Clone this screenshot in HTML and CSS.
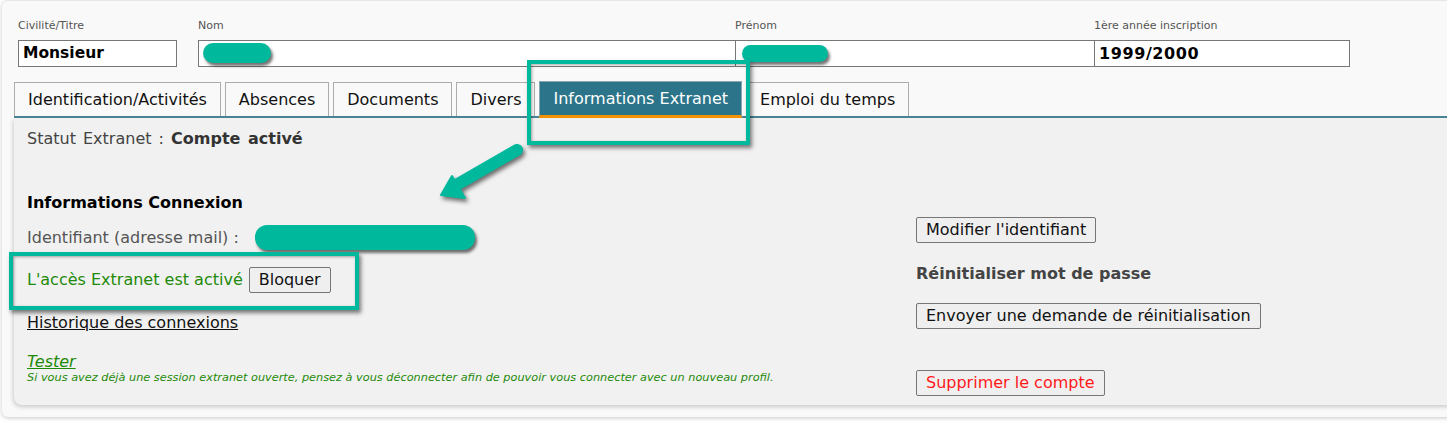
FILE: index.html
```html
<!DOCTYPE html>
<html lang="fr">
<head>
<meta charset="utf-8">
<title>Informations Extranet</title>
<link rel="stylesheet" href="styles.css">
</head>
<body>
<div class="card">
  <div class="fields">
    <div class="field f-civ">
      <label class="lbl">Civilité/Titre</label>
      <div class="inp">Monsieur</div>
    </div>
    <div class="field f-nom">
      <label class="lbl">Nom</label>
      <div class="inp"></div>
    </div>
    <div class="field f-pre">
      <label class="lbl">Prénom</label>
      <div class="inp"></div>
    </div>
    <div class="field f-ann">
      <label class="lbl">1ère année inscription</label>
      <div class="inp">1999/2000</div>
    </div>
  </div>

  <div class="tabs">
    <div class="tab">Identification/Activités</div>
    <div class="tab">Absences</div>
    <div class="tab">Documents</div>
    <div class="tab">Divers</div>
    <div class="tab active">Informations Extranet</div>
    <div class="tab">Emploi du temps</div>
  </div>

  <div class="panel">
    <div class="col-left">
      <div class="statut">Statut Extranet : <b>Compte activé</b></div>
      <div class="h-conn">Informations Connexion</div>
      <div class="ident">Identifiant (adresse mail) : </div>
      <div class="acces"><span class="green">L'accès Extranet est activé</span><button class="btn">Bloquer</button></div>
      <div class="histo"><a class="link">Historique des connexions</a></div>
      <div class="tester"><a class="link green">Tester</a></div>
      <div class="note">Si vous avez déjà une session extranet ouverte, pensez à vous déconnecter afin de pouvoir vous connecter avec un nouveau profil.</div>
    </div>
    <div class="col-right">
      <button class="btn b-mod">Modifier l'identifiant</button>
      <div class="h-reinit">Réinitialiser mot de passe</div>
      <button class="btn b-env">Envoyer une demande de réinitialisation</button>
      <button class="btn b-sup">Supprimer le compte</button>
    </div>
  </div>
</div>

<div class="redact r-nom"></div>
<div class="redact r-pre"></div>
<div class="redact r-id"></div>
<div class="hl hl-tab"></div>
<div class="hl hl-acces"></div>
<svg class="arrow" width="100" height="70" viewBox="0 0 100 70">
  <line x1="92" y1="15" x2="33" y2="49" stroke="#00b89c" stroke-width="12" stroke-linecap="round"/>
  <polygon points="16,60 27,41 40,63" fill="#00b89c" stroke="#00b89c" stroke-width="2" stroke-linejoin="round"/>
</svg>
</body>
</html>
```
FILE: styles.css
```css
html, body {
  margin: 0;
  padding: 0;
  background: #ffffff;
}
body {
  width: 1447px;
  height: 432px;
  overflow: hidden;
  position: relative;
  font-family: "DejaVu Sans", "Liberation Sans", sans-serif;
  color: #222;
}
.card {
  margin-left: 2px;
  width: 1480px;
  background: #f9f9f9;
  border-radius: 6px;
  box-shadow: 0 1px 4px rgba(0,0,0,0.22);
  padding: 16px 0 12px 12px;
  box-sizing: border-box;
  border-top: 1px solid #e6e6e6;
}
.fields {
  display: flex;
  margin-left: 4px;
}
.field {
  display: flex;
  flex-direction: column;
}
.lbl {
  font-size: 11px;
  line-height: 18px;
  color: #555;
  height: 18px;
  margin-bottom: 5px;
}
.inp {
  height: 27px;
  box-sizing: border-box;
  border: 1px solid #777;
  background: #fff;
  font-weight: bold;
  font-size: 15.5px;
  line-height: 25px;
  padding-left: 4px;
  color: #000;
}
.f-civ { width: 159px; margin-right: 21px; }
.f-nom { width: 538px; margin-right: -1px; }
.f-pre { width: 360px; margin-right: -1px; }
.f-ann { width: 256px; }
.f-ann .inp { letter-spacing: 0.6px; font-size: 16px; }

.tabs {
  display: flex;
  align-items: flex-end;
  gap: 4px;
  margin-top: 15px;
  border-bottom: 2px solid #4a8696;
  height: 36px;
  box-sizing: border-box;
}
.tab {
  height: 34px;
  box-sizing: border-box;
  border: 1px solid #acacac;
  border-bottom: none;
  background: #f9f9f9;
  padding: 0 13px;
  font-size: 16px;
  line-height: 34px;
  color: #111;
  white-space: nowrap;
}
.tab.active {
  height: 37px;
  margin-bottom: -2px;
  background: #2c7489;
  color: #fff;
  border-color: #8aa7b0;
  border-bottom: 3px solid #f39200;
  line-height: 34px;
}

.panel {
  display: flex;
  background: #f1f1f1;
  border-bottom-left-radius: 8px;
  box-shadow: -1px 2px 4px rgba(0,0,0,0.18);
  padding: 9px 0 9px 13px;
  font-size: 16px;
}
.col-left {
  width: 889px;
  line-height: 20px;
}
.statut { color: #444; padding-top: 2px; word-spacing: 2px; }
.statut b { color: #333; }
.h-conn {
  margin-top: 44px;
  font-weight: bold;
  color: #000;
}
.ident {
  margin-top: 15px;
  color: #555;
}
.acces {
  margin-top: 19px;
  display: flex;
  align-items: center;
  gap: 6px;
  height: 26px;
}
.green { color: #1f8a0a; }
.histo { margin-top: 20px; }
.link {
  color: #111;
  text-decoration: underline;
}
.link.green { color: #1f8a0a; }
.tester {
  margin-top: 19px;
  font-style: italic;
}
.note {
  font-style: italic;
  font-size: 11.3px;
  line-height: 12px;
  color: #1f8a0a;
  white-space: nowrap;
}
.col-right {
  display: flex;
  flex-direction: column;
  align-items: flex-start;
  padding-top: 90px;
}
.btn {
  font-family: inherit;
  font-size: 16px;
  height: 26px;
  box-sizing: border-box;
  padding: 0 9px;
  background: #efefef;
  border: 1px solid #767676;
  border-radius: 2px;
  color: #111;
  line-height: 22px;
}
.h-reinit {
  margin-top: 21px;
  font-weight: bold;
  color: #444;
  line-height: 20px;
}
.b-env { margin-top: 19px; }
.b-sup { margin-top: 41px; color: #ff1a1a; }

/* annotation overlays */
.redact {
  position: absolute;
  background: #00b89c;
  border-radius: 12px;
  box-shadow: 2px 3px 3px rgba(0,0,0,0.55);
}
.r-nom { left: 203px; top: 43px; width: 68px; height: 20px; }
.r-pre { left: 742px; top: 45px; width: 86px; height: 17px; }
.r-id { left: 255px; top: 225px; width: 220px; height: 25px; }
.hl {
  position: absolute;
  border: 4px solid #00b89c;
  box-shadow: 2px 3px 4px rgba(0,0,0,0.5), inset 1px 1px 3px rgba(0,0,0,0.35);
  box-sizing: border-box;
}
.hl-tab { left: 527px; top: 60px; width: 223px; height: 85px; }
.hl-acces { left: 9px; top: 252px; width: 350px; height: 58px; }
.arrow {
  position: absolute;
  left: 425px;
  top: 135px;
  filter: drop-shadow(2px 3px 2px rgba(0,0,0,0.55));
}
```
